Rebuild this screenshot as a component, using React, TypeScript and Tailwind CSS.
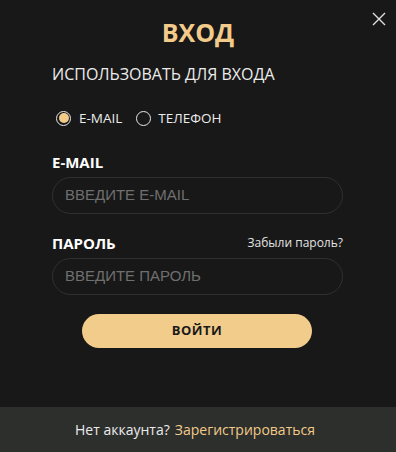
export default function App() {
  return (
    <div
      className="relative flex h-[452px] w-[396px] flex-col bg-[#181818] text-[#ececec]"
      style={{ fontFamily: '"Open Sans", "Noto Sans", sans-serif' }}
    >
      <button className="absolute right-[10px] top-[12px] h-[14px] w-[14px] text-[#e0e0e0]">
        <svg viewBox="0 0 14 14" className="h-[14px] w-[14px]" fill="none" stroke="currentColor" strokeWidth="1.4">
          <path d="M1 1 13 13M13 1 1 13" />
        </svg>
      </button>

      <div className="flex flex-1 flex-col px-[52px]">
        <h1 className="mt-[15px] text-center text-[25px] font-bold leading-[34px] text-[#f2cb8a]">ВХОД</h1>

        <p className="mt-[14px] text-[16px] leading-[22px]">ИСПОЛЬЗОВАТЬ ДЛЯ ВХОДА</p>

        <div className="mt-[23px] flex items-center pl-[4px] text-[13.5px] leading-[20px]">
          <span className="flex h-[15px] w-[15px] items-center justify-center rounded-full border border-[#e8e8e8]">
            <span className="h-[10px] w-[10px] rounded-full bg-[#f2cb8a]" />
          </span>
          <span className="ml-[8px]">E-MAIL</span>
          <span className="ml-[14px] h-[15px] w-[15px] rounded-full border border-[#e8e8e8]" />
          <span className="ml-[7px]">ТЕЛЕФОН</span>
        </div>

        <label className="mt-[24px] text-[15px] font-bold leading-[20px] text-white">E-MAIL</label>
        <div
          className="mt-[5px] flex h-[37px] w-[291px] items-center rounded-full border border-[#303030] pl-[12px] text-[15px] text-[#6f6f6f]"
          style={{ fontFamily: '"Liberation Sans", Arial, sans-serif' }}
        >
          ВВЕДИТЕ E-MAIL
        </div>

        <div className="mt-[19px] flex w-[291px] items-center justify-between">
          <span className="text-[15px] font-bold leading-[20px] text-white">ПАРОЛЬ</span>
          <span className="text-[12px] leading-[18px] text-[#e4e4e4]">Забыли пароль?</span>
        </div>
        <div
          className="mt-[5px] flex h-[37px] w-[291px] items-center rounded-full border border-[#303030] pl-[12px] text-[15px] text-[#6f6f6f]"
          style={{ fontFamily: '"Liberation Sans", Arial, sans-serif' }}
        >
          ВВЕДИТЕ ПАРОЛЬ
        </div>

        <button className="ml-[30px] mt-[19px] h-[34px] w-[230px] rounded-full bg-[#f2cc8b] text-[13px] font-bold tracking-[0.04em] text-[#1a1a1a]">
          ВОЙТИ
        </button>
      </div>

      <div className="flex h-[45px] items-center justify-center bg-[#2d2f2c] pr-[6px] text-[14px]">
        <span className="text-[#ececec]">Нет аккаунта?</span>
        <span className="ml-[5px] text-[#f2cb8a]">Зарегистрироваться</span>
      </div>
    </div>
  );
}
